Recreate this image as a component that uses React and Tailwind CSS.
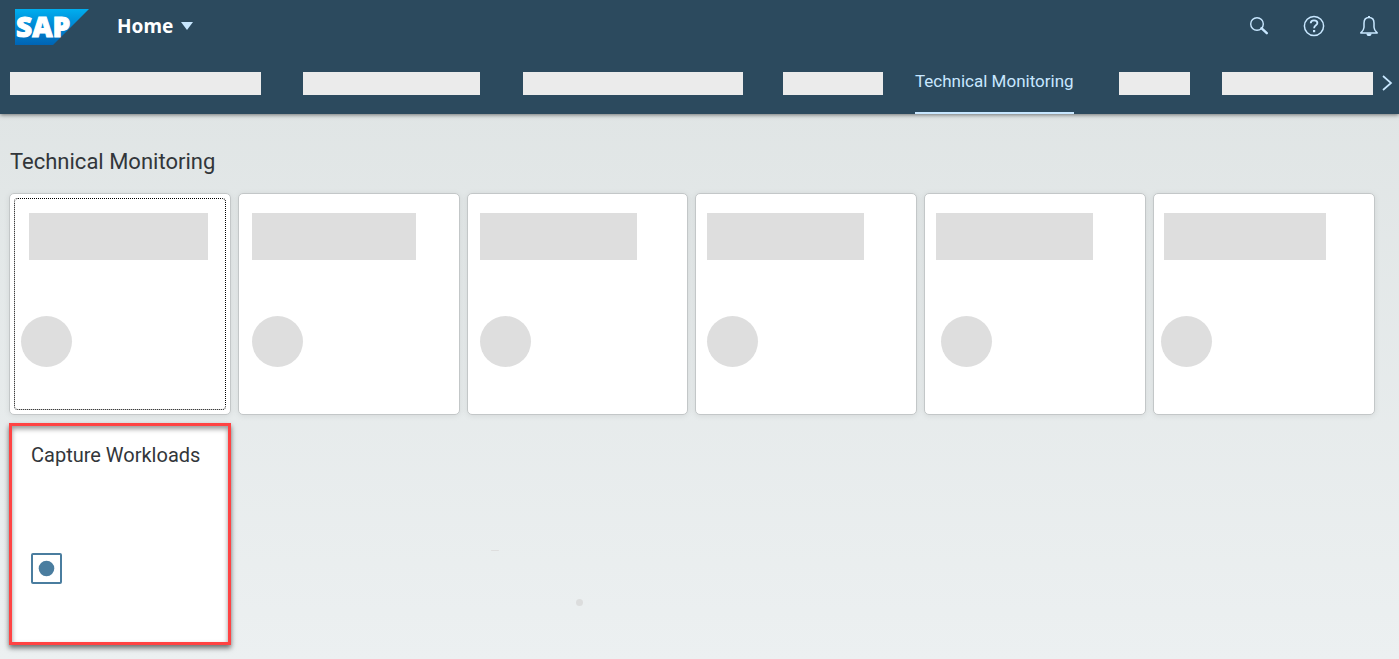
import React from "react";

const leadingTabs = [
  { label: "Group 1", size: "w-[251px] mr-[42px]" },
  { label: "Group 2", size: "w-[177px] mr-[43px]" },
  { label: "Group 3", size: "w-[220px] mr-10" },
  { label: "Group 4", size: "w-[100px] mr-8" },
];

const trailingTabs = [
  { label: "Group 6", size: "w-[71px] mr-8" },
  { label: "Group 7", size: "w-[151px] mr-2" },
];

const tiles = [
  { bar: "ml-[19px] w-[179px]", dot: "ml-[11px]", focused: true },
  { bar: "ml-[13px] w-[164px]", dot: "ml-[13px]" },
  { bar: "ml-3 w-[157px]", dot: "ml-3" },
  { bar: "ml-[11px] w-[157px]", dot: "ml-[11px]" },
  { bar: "ml-[11px] w-[157px]", dot: "ml-4" },
  { bar: "ml-[10px] w-[162px]", dot: "ml-[7px]" },
];

function SapLogo() {
  return (
    <svg width="74" height="36" viewBox="0 0 74 36" role="img" aria-label="SAP" className="overflow-visible">
      <defs>
        <linearGradient id="sap-blue" x1="0" y1="0" x2="0" y2="1">
          <stop offset="0" stopColor="#00aeef" />
          <stop offset="0.5" stopColor="#0086d2" />
          <stop offset="1" stopColor="#0064b4" />
        </linearGradient>
      </defs>
      <path d="M0 0H74L38 36H0Z" fill="url(#sap-blue)" />
      <text
        x="1"
        y="28"
        strokeWidth="1"
        className="fill-white stroke-white font-['Open_Sans',sans-serif] text-[28px] font-extrabold"
      >
        SAP
      </text>
    </svg>
  );
}

function SearchIcon() {
  return (
    <svg width="20" height="20" viewBox="0 0 20 20" fill="none" stroke="#c8e7ff">
      <circle cx="8" cy="8" r="6.3" strokeWidth="1.4" />
      <path d="M12.4 12.2L17.8 17.2" strokeWidth="2.4" strokeLinecap="round" />
    </svg>
  );
}

function HelpIcon() {
  return (
    <svg width="22" height="22" viewBox="0 0 22 22" fill="none" stroke="#c8e7ff">
      <circle cx="11" cy="11" r="9.6" strokeWidth="1.5" />
      <path
        d="M7.7 8.2C7.7 6.3 9.1 5.3 11 5.3S14.4 6.4 14.4 8.1C14.4 10.4 11.1 10.3 11.1 13.2"
        strokeWidth="1.8"
      />
      <rect x="10" y="15" width="2.2" height="2.2" fill="#c8e7ff" stroke="none" />
    </svg>
  );
}

function BellIcon() {
  return (
    <svg width="20" height="22" viewBox="0 0 20 22" fill="none" stroke="#c8e7ff">
      <path
        d="M10 2.4C6.8 2.4 5 4.7 5 8V12.2C5 14.7 3.9 16 1.8 17.9H18.2C16.1 16 15 14.7 15 12.2V8C15 4.7 13.2 2.4 10 2.4Z"
        strokeWidth="1.5"
        strokeLinejoin="round"
      />
      <path d="M9 0.9H11V2.4H9ZM7.4 18.4H12.6C12.6 20 11.5 21 10 21S7.4 20 7.4 18.4Z" fill="#c8e7ff" stroke="none" />
    </svg>
  );
}

function TabPlaceholder({ label, size }) {
  return (
    <button type="button" aria-label={label} className={`h-[23px] shrink-0 bg-[#ebebeb] ${size}`} />
  );
}

function Tile({ bar, dot, focused }) {
  return (
    <article className="aspect-square rounded-[5px] border border-[#c3c7c8] bg-white shadow-[0_1px_6px_rgba(0,0,0,0.08)]">
      <div
        className={`h-full pt-[19px] ${
          focused
            ? "outline-1 outline-dotted outline-black -outline-offset-5 rounded-[8px]"
            : ""
        }`}
      >
        <div className={`h-[47px] bg-[#dedede] ${bar}`} />
        <div className={`mt-14 size-[51px] rounded-full bg-[#dedede] ${dot}`} />
      </div>
    </article>
  );
}

export default function App() {
  return (
    <div className="flex min-h-screen flex-col bg-linear-to-b from-[#dee3e3] to-[#ecf0f1] font-[Roboto,sans-serif]">
      <header className="relative bg-[#2c4a5e] shadow-[0_1px_4px_rgba(0,0,0,0.5)]">
        <div className="flex h-[52px] items-center pr-5 pl-[15px]">
          <a href="#home" className="block pt-0.5">
            <SapLogo />
          </a>
          <button
            type="button"
            className="ml-7 flex items-center gap-2 font-['Noto_Sans',sans-serif] text-[19px] leading-6 font-bold text-white"
          >
            Home
            <svg width="12" height="8" viewBox="0 0 12 8" aria-hidden="true">
              <path d="M0 0H12L6 8Z" fill="#c8e7ff" />
            </svg>
          </button>
          <div className="ml-auto flex items-center gap-[34px]">
            <button type="button" aria-label="Search">
              <SearchIcon />
            </button>
            <button type="button" aria-label="Help">
              <HelpIcon />
            </button>
            <button type="button" aria-label="Notifications">
              <BellIcon />
            </button>
          </div>
        </div>
        <nav className="flex h-[62px] items-center overflow-hidden pl-[10px]" aria-label="Groups">
          {leadingTabs.map((tab) => (
            <TabPlaceholder key={tab.label} {...tab} />
          ))}
          <a
            href="#technical-monitoring"
            aria-current="page"
            className="mr-[45px] flex h-full w-[159px] shrink-0 items-center border-b-2 border-[#c8e7ff] text-[17px] whitespace-nowrap text-[#c8e7ff]"
          >
            Technical Monitoring
          </a>
          {trailingTabs.map((tab) => (
            <TabPlaceholder key={tab.label} {...tab} />
          ))}
          <button type="button" aria-label="More groups" className="shrink-0">
            <svg width="12" height="16" viewBox="0 0 12 16" fill="none" stroke="#c8e7ff" strokeWidth="1.7">
              <path d="M2 1L10 8L2 15" />
            </svg>
          </button>
        </nav>
      </header>

      <main id="technical-monitoring" className="relative grow pt-8 pr-6 pb-3 pl-[9px]">
        <h1 className="ml-px text-[22px] leading-8 text-[#32363a]">Technical Monitoring</h1>
        <div className="mt-[15px] grid grid-cols-6 gap-x-[7px] gap-y-2">
          {tiles.map((tile, i) => (
            <Tile key={i} {...tile} />
          ))}
          <a
            href="#capture-workloads"
            className="flex aspect-square flex-col border-3 border-[#ff4343] bg-white pt-[17px] pl-[19px] shadow-[0_3px_5px_rgba(0,0,0,0.55),inset_0_3px_5px_rgba(0,0,0,0.4)]"
          >
            <span className="text-[20px] leading-6 text-[#32363a]">Capture Workloads</span>
            <svg className="mt-[86px]" width="31" height="31" viewBox="0 0 31 31" aria-hidden="true">
              <rect x="1" y="1" width="29" height="29" rx="1" fill="none" stroke="#4a7d9f" strokeWidth="2" />
              <circle cx="15.5" cy="15.5" r="7.8" fill="#4a7d9f" />
            </svg>
          </a>
        </div>
        <span className="absolute top-[436px] left-[491px] h-px w-2 rounded-full bg-[#dedede]" />
        <span className="absolute top-[485px] left-[576px] size-[7px] rounded-full bg-[#dcdddd]" />
      </main>
    </div>
  );
}
